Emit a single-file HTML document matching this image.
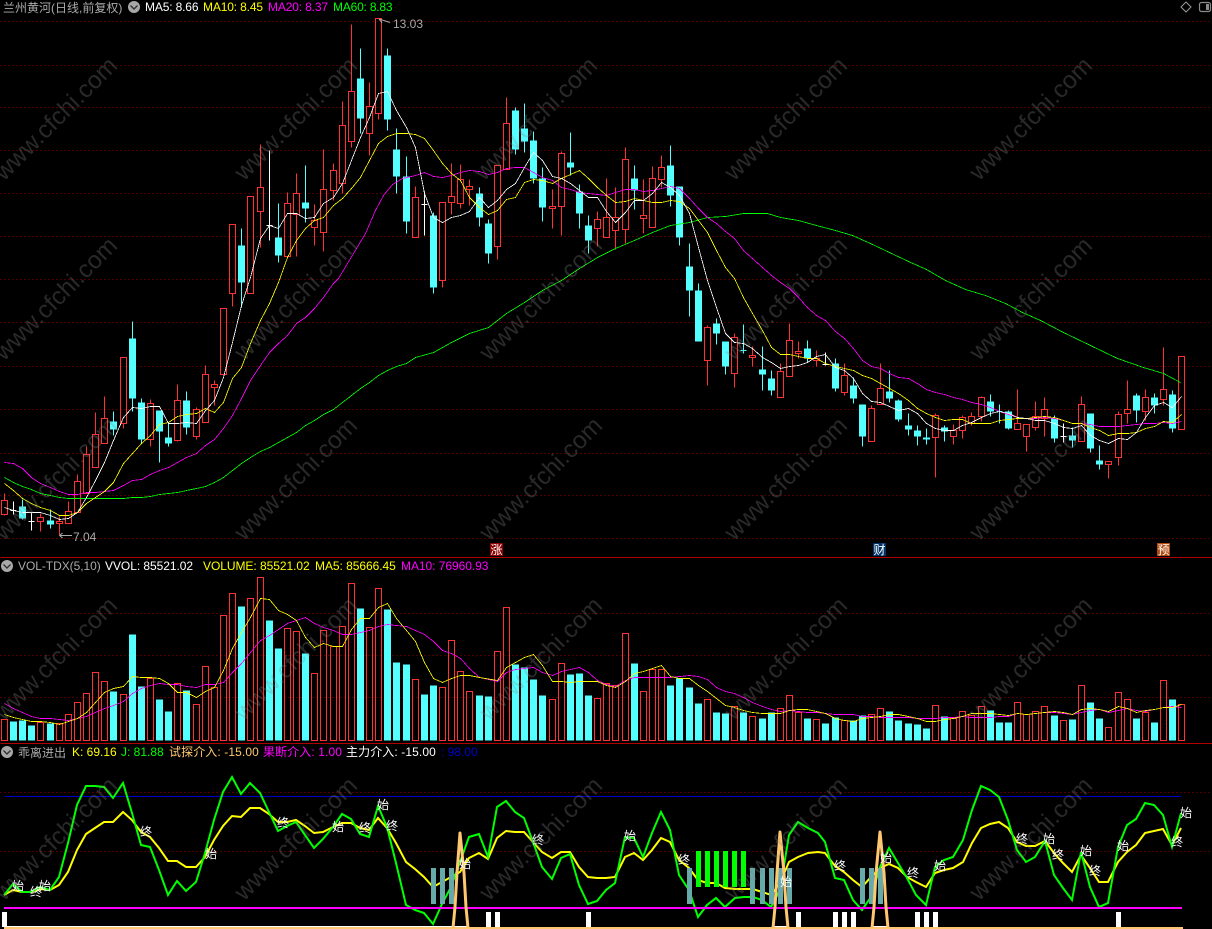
<!DOCTYPE html>
<html lang="zh">
<head>
<meta charset="utf-8">
<title>兰州黄河</title>
<style>
html,body{margin:0;padding:0;background:#000;width:1212px;height:929px;overflow:hidden}
svg{display:block;position:absolute;left:0;top:0}
text{font-family:"Liberation Sans","WenQuanYi Zen Hei","Noto Sans CJK SC",sans-serif;font-size:12px}
.h{letter-spacing:-.05px}
.g{fill:#aaa}
.m{font-size:12px;fill:#fff;text-anchor:middle}
.w{font-size:24.500px;fill:#888;fill-opacity:.3;text-anchor:middle}
.l{fill:none;shape-rendering:crispEdges}
.t{stroke-width:.8}
</style>
</head>
<body>
<svg width="1212" height="929" viewBox="0 0 1212 929" xmlns="http://www.w3.org/2000/svg">
<rect width="1212" height="929" fill="#000"/>
<g transform="translate(.5,.5)">
<!-- grids -->
<path class="l" stroke="#9a0000" stroke-dasharray="1 3" d="M0 21H1212M0 65H1212M0 107H1212M0 150H1212M0 193H1212M0 236H1212M0 279H1212M0 322H1212M0 366H1212M0 409H1212M0 453H1212M0 495H1212M0 538H1212M0 613H1212M0 655H1212M0 697H1212M0 792H1212M0 851H1212"/>
<path class="l" stroke="#b00000" d="M0 557H1212M0 743H1212"/>

<!-- main red candles -->
<path class="l" stroke="#ff3232" d="M1 500H7V514H1ZM4 493V500M4 514V515M37 517H43V521H37ZM40 513V517M40 521V531M56 521H62V523H56ZM59 516V521M59 523V535M65 511H71V523H65ZM68 501V511M74 481H80V512H74ZM77 474V481M83 454H89V493H83ZM86 446V454M92 434H98V467H92ZM95 412V434M101 418H107V443H101ZM104 396V418M120 357H126V423H120ZM123 423V428M147 403H153V439H147ZM150 399V403M150 439V446M174 400H180V440H174ZM177 384V400M177 440V441M193 409H199V436H193ZM196 407V409M196 436V439M202 374H208V422H202ZM205 365V374M211 384H217V387H211ZM214 380V384M214 387V405M220 308H226V374H220ZM229 224H235V293H229ZM232 293V306M247 196H253V293H247ZM257 187H263V211H257ZM260 144V187M260 211V247M284 203H290V256H284ZM287 192V203M293 193H299V214H293ZM296 173V193M296 214V256M311 220H317V227H311ZM314 204V220M314 227V245M320 189H326V232H320ZM323 149V189M323 232V251M330 170H336V190H330ZM333 163V170M333 190V200M339 125H345V183H339ZM342 101V125M342 183V193M348 91H354V141H348ZM351 24V91M351 141V147M366 106H372V133H366ZM369 82V106M369 133V155M375 18H381V113H375ZM378 113V119M412 197H418V237H412ZM415 186V197M439 202H445V280H439ZM442 280V287M448 196H454V202H448ZM451 163V196M451 202V214M457 179H463V203H457ZM460 164V179M460 203V208M466 186H472V189H466ZM469 179V186M469 189V205M494 165H500V246H494ZM497 246V259M503 123H509V169H503ZM506 97V123M549 206H555V208H549ZM552 189V206M552 208V228M558 153H564V206H558ZM561 151V153M561 206V235M594 219H600V228H594ZM597 211V219M597 228V246M603 217H609V237H603ZM606 178V217M612 217H618V230H612ZM615 187V217M615 230V249M622 159H628V229H622ZM625 147V159M625 229V243M640 215H646V218H640ZM643 179V215M643 218V233M649 178H655V227H649ZM652 166V178M658 167H664V179H658ZM661 155V167M661 179V187M704 327H710V360H704ZM707 325V327M707 360V385M731 337H737V373H731ZM734 333V337M734 373V387M749 355H755V357H749ZM752 346V355M752 357V366M777 371H783V397H777ZM780 363V371M786 340H792V376H786ZM789 323V340M795 351H801V353H795ZM798 341V351M798 353V358M813 358H819V360H813ZM816 350V358M816 360V366M841 375H847V392H841ZM844 363V375M844 392V395M868 408H874V441H868ZM871 405V408M877 388H883V404H877ZM880 363V388M932 415H938V437H932ZM935 413V415M935 437V477M950 430H956V436H950ZM953 424V430M953 436V444M959 417H965V430H959ZM962 415V417M962 430V438M968 416H974V423H968ZM971 412V416M971 423V425M978 397H984V416H978ZM981 396V397M981 416V421M1014 423H1020V429H1014ZM1017 389V423M1023 424H1029V436H1023ZM1026 436V451M1032 416H1038V427H1032ZM1035 401V416M1035 427V430M1041 409H1047V418H1041ZM1044 397V409M1044 418V436M1078 404H1084V441H1078ZM1081 396V404M1105 461H1111V464H1105ZM1108 464V478M1115 414H1121V457H1115ZM1118 411V414M1118 457V465M1124 409H1130V413H1124ZM1127 380V409M1127 413V423M1142 397H1148V411H1142ZM1145 389V397M1145 411V420M1160 389H1166V399H1160ZM1163 347V389M1163 399V405M1178 356H1184V429H1178Z"/>
<!-- main cyan wicks -->
<path class="l" stroke="#54ffff" d="M22 499V519M50 509V528M113 411V435M132 321V411M141 398V443M159 410V462M168 423V446M186 391V434M241 228V307M278 203V262M305 165V222M360 48V133M387 48V130M396 128V193M406 156V233M433 212V293M479 187V226M488 219V263M515 107V154M524 103V152M533 131V183M542 167V221M570 132V175M579 184V228M588 215V253M634 165V209M670 145V206M679 186V245M689 243V316M698 283V341M716 318V344M725 341V374M743 324V353M740 350H746M762 346V390M771 370V395M807 340V362M835 358V391M853 377V403M862 404V446M889 370V402M898 399V421M908 413V435M917 425V445M926 428V444M944 425V441M990 394V416M999 404V423M996 411H1002M1008 410V429M1054 415V442M1072 427V447M1090 413V452M1099 445V469M1136 393V422M1154 393V413M1172 390V432"/>
<!-- main cyan bodies -->
<path class="l" stroke="#54ffff" stroke-width="7" d="M22 506V518M50 520V524M113 421V429M132 338V398M141 402V439M159 410V431M168 437V443M186 400V427M241 245V282M278 237V255M305 202V208M360 78V118M387 55V119M396 149V176M406 176V221M433 215V287M479 193V217M488 223V253M515 110V149M524 128V141M533 140V178M542 178V207M570 162V167M579 191V213M588 225V240M634 178V190M670 165V195M679 186V237M689 266V290M698 290V341M716 323V333M725 341V366M762 369V374M771 378V390M807 348V358M835 363V388M853 385V398M862 404V436M889 391V398M898 400V419M908 425V429M917 430V436M926 437V439M944 427V431M990 401V411M1008 411V428M1054 418V438M1072 435V440M1090 413V448M1099 460V464M1136 395V410M1154 397V405M1172 394V428"/>
<!-- white dojis -->
<path class="l" stroke="#fff" d="M13 501V514M10 510H16M31 512V530M28 521H34M269 150V240M266 225H272M424 191V235M421 204H427M825 352V365M822 364H828M1063 423V442M1060 436H1066"/>

<!-- main MAs -->
<polyline class="l t" stroke="#00ff00" points="4,477 13,482 22,486 31,489 40,493 50,495 59,497 68,498 77,498 123,498 132,497 141,497 150,496 159,494 168,493 177,492 186,490 196,488 205,486 214,482 223,477 232,470 241,463 250,457 260,451 269,447 278,442 287,437 296,432 305,425 314,420 323,414 333,409 342,402 351,395 360,388 369,382 378,375 387,370 396,366 406,363 415,357 433,352 451,342 469,333 488,327 506,313 524,302 542,290 561,280 579,268 597,257 615,248 634,240 652,232 670,225 689,222 707,217 725,216 743,213 767,213 780,217 798,220 816,225 835,230 852,235 870,243 889,252 908,261 926,269 945,280 965,289 985,295 1005,303 1022,312 1040,320 1063,332 1090,345 1117,358 1143,367 1163,373 1180,382"/>
<polyline class="l t" stroke="#ff00ff" points="4,462 13,463 22,468 31,477 40,483 50,487 59,491 68,494 77,494 86,492 95,492 104,491 113,490 123,485 132,480 141,479 150,474 159,470 168,467 177,462 186,457 196,453 205,445 214,439 223,428 232,415 241,398 250,380 260,365 269,352 278,343 287,335 296,323 305,317 314,308 323,297 333,283 338,278 347,263 356,248 365,233 375,210 383,195 392,184 402,178 415,175 424,172 433,176 442,177 451,175 460,172 469,170 479,171 488,174 497,172 506,168 515,167 524,167 533,172 542,177 552,180 561,187 570,189 579,192 588,193 597,194 606,195 615,192 625,189 634,189 643,191 652,190 661,188 670,186 679,188 689,198 698,208 707,217 716,223 725,231 734,238 743,250 752,258 762,267 771,275 780,282 789,288 798,297 807,307 816,315 825,320 835,331 844,338 853,348 862,360 871,366 880,368 889,373 898,377 908,378 917,383 926,389 935,392 944,394 953,397 962,399 971,402 981,404 990,407 999,411 1008,414 1017,417 1026,418 1035,418 1044,417 1054,418 1063,420 1072,423 1081,423 1090,424 1099,426 1108,426 1118,426 1127,425 1136,424 1145,423 1154,423 1163,422 1172,423 1181,421"/>
<polyline class="l t" stroke="#ffff00" points="4,483 13,490 22,498 31,503 40,507 50,510 59,515 68,515 77,512 86,503 95,497 104,491 113,482 123,463 132,453 141,443 150,435 159,424 168,422 177,416 186,414 196,413 205,408 214,412 223,402 232,378 241,367 250,343 260,320 269,303 278,282 287,257 296,240 305,228 314,220 323,217 333,205 342,198 351,188 360,177 369,160 378,143 387,136 396,133 406,133 415,134 424,138 433,150 442,163 451,173 460,180 469,197 479,207 488,214 497,210 506,199 515,197 524,182 533,179 542,180 552,183 561,178 570,174 579,170 588,178 597,187 606,195 615,202 625,201 634,198 643,200 652,202 661,202 670,200 679,201 689,208 698,220 707,232 716,250 725,267 734,278 743,297 752,313 762,330 771,347 780,354 789,354 798,356 807,358 816,358 825,363 835,366 844,368 853,370 862,375 871,378 880,383 889,388 898,393 908,400 917,408 926,413 935,417 944,420 953,419 962,419 971,423 981,423 990,423 999,420 1008,419 1017,418 1026,418 1035,417 1044,416 1054,417 1063,420 1072,423 1081,423 1090,427 1099,430 1108,435 1118,433 1127,433 1136,432 1145,428 1154,426 1163,421 1172,422 1181,414"/>
<polyline class="l t" stroke="#ffffff" points="4,507 13,510 22,512 31,512 40,512 50,515 59,519 68,518 77,512 86,497 95,480 104,462 113,440 123,417 132,407 141,408 150,406 159,406 168,423 177,423 186,422 196,423 205,410 214,400 223,377 232,342 241,305 250,277 260,238 269,225 278,228 287,213 296,213 305,218 314,217 323,203 333,197 342,183 351,160 360,137 369,117 378,93 387,91 396,110 406,127 415,147 424,193 433,217 442,222 451,217 460,215 469,211 479,197 488,207 497,200 506,189 515,183 524,167 533,152 542,160 552,176 561,178 570,183 579,190 588,197 597,197 606,211 615,222 625,212 634,200 643,200 652,193 661,182 670,187 679,195 689,213 698,247 707,280 716,307 725,333 734,342 743,343 752,348 762,357 771,362 780,368 789,366 798,365 807,362 816,356 825,354 835,367 844,370 853,378 862,393 871,401 880,402 889,406 898,410 908,408 917,413 926,423 935,428 944,430 953,430 962,425 971,422 981,417 990,413 999,411 1008,413 1017,417 1026,418 1035,420 1044,420 1054,423 1063,427 1072,428 1081,425 1090,435 1099,440 1108,443 1118,438 1127,439 1136,432 1145,417 1154,405 1163,402 1172,407 1181,396"/>

<!-- volume red -->
<path class="l" stroke="#ff3232" d="M1 719H7V740H1ZM37 722H43V740H37ZM56 723H62V740H56ZM65 714H71V740H65ZM74 702H80V740H74ZM83 693H89V740H83ZM92 672H98V740H92ZM101 681H107V740H101ZM120 694H126V740H120ZM147 678H153V740H147ZM174 683H180V740H174ZM193 704H199V740H193ZM202 666H208V740H202ZM211 687H217V740H211ZM220 615H226V740H220ZM229 593H235V740H229ZM247 598H253V740H247ZM257 577H263V740H257ZM284 628H290V740H284ZM293 631H299V740H293ZM311 673H317V740H311ZM320 630H326V740H320ZM330 646H336V740H330ZM339 626H345V740H339ZM348 583H354V740H348ZM366 627H372V740H366ZM375 588H381V740H375ZM412 679H418V740H412ZM439 687H445V740H439ZM448 640H454V740H448ZM457 671H463V740H457ZM466 691H472V740H466ZM494 651H500V740H494ZM503 607H509V740H503ZM549 699H555V740H549ZM558 663H564V740H558ZM594 698H600V740H594ZM603 683H609V740H603ZM612 685H618V740H612ZM622 633H628V740H622ZM640 691H646V740H640ZM649 669H655V740H649ZM658 669H664V740H658ZM704 699H710V740H704ZM731 706H737V740H731ZM749 716H755V740H749ZM777 708H783V740H777ZM786 695H792V740H786ZM795 712H801V740H795ZM813 719H819V740H813ZM841 720H847V740H841ZM868 714H874V740H868ZM877 708H883V740H877ZM932 705H938V740H932ZM950 718H956V740H950ZM959 711H965V740H959ZM968 715H974V740H968ZM978 706H984V740H978ZM1014 702H1020V740H1014ZM1023 714H1029V740H1023ZM1032 711H1038V740H1032ZM1041 706H1047V740H1041ZM1060 720H1066V740H1060ZM1078 685H1084V740H1078ZM1105 727H1111V740H1105ZM1115 692H1121V740H1115ZM1124 699H1130V740H1124ZM1142 712H1148V740H1142ZM1160 680H1166V740H1160ZM1178 704H1184V740H1178Z"/>
<!-- volume cyan -->
<path class="l" stroke="#54ffff" stroke-width="7" d="M13 721V740M22 720V740M31 725V740M50 723V740M113 691V740M132 634V740M141 686V740M159 699V740M168 711V740M186 690V740M241 606V740M269 620V740M278 648V740M305 653V740M360 608V740M387 609V740M396 662V740M406 664V740M424 694V740M433 685V740M479 695V740M488 696V740M515 664V740M524 667V740M533 679V740M542 695V740M570 674V740M579 673V740M588 695V740M634 663V740M670 685V740M679 678V740M689 687V740M698 703V740M716 712V740M725 713V740M743 712V740M762 718V740M771 712V740M807 718V740M825 723V740M835 717V740M853 720V740M862 715V740M889 711V740M898 720V740M908 723V740M917 724V740M926 728V740M944 716V740M990 710V740M999 722V740M1008 722V740M1054 715V740M1072 719V740M1090 702V740M1099 718V740M1136 718V740M1154 722V740M1172 699V740"/>
<polyline class="l t" stroke="#ff00ff" points="4,703 13,708 22,712 31,716 40,718 50,718 59,719 68,720 77,718 86,716 95,712 104,708 113,705 123,701 132,693 141,688 150,685 159,683 168,684 177,684 186,686 196,687 205,684 214,684 223,682 232,672 241,663 250,652 260,640 269,635 278,629 287,623 296,620 305,617 314,623 323,627 333,630 342,634 351,634 360,632 369,630 378,626 387,624 396,625 406,626 415,630 424,634 433,641 442,650 451,653 460,658 469,668 479,677 497,681 506,672 515,669 524,668 533,667 542,672 552,675 561,671 570,669 579,667 588,672 597,680 606,684 615,686 625,680 634,677 643,677 652,677 661,677 670,677 679,676 689,675 698,676 707,679 716,687 725,691 734,693 743,697 752,702 762,706 771,709 780,711 789,710 798,711 807,712 816,712 825,713 835,714 844,714 853,714 862,716 871,716 880,717 889,717 898,717 908,717 917,718 926,718 935,718 944,717 953,717 962,716 971,717 981,717 990,717 999,716 1008,716 1017,713 1026,714 1035,713 1044,712 1054,712 1063,713 1072,714 1081,712 1090,710 1099,709 1108,712 1118,710 1127,708 1136,710 1145,711 1154,709 1163,707 1172,706 1181,707"/>
<polyline class="l t" stroke="#ffff00" points="4,714 13,717 22,719 31,721 40,721 50,722 59,724 68,721 77,718 86,712 95,702 104,692 113,688 123,686 132,676 141,677 150,677 159,678 168,683 177,692 186,692 196,697 205,691 214,687 223,670 232,648 241,632 250,617 260,598 269,599 278,610 287,614 296,620 305,637 314,647 323,643 333,646 342,646 351,629 360,618 369,618 378,607 387,603 396,618 406,630 415,641 424,662 433,678 442,682 451,678 460,675 469,675 479,677 497,680 506,667 515,662 524,657 533,654 542,665 552,681 561,681 570,682 579,681 588,681 597,681 606,685 615,687 625,681 634,673 643,671 652,668 661,665 670,676 679,678 689,678 698,685 707,691 716,698 725,705 734,707 743,710 752,712 762,713 771,713 780,713 789,710 798,709 807,709 816,711 825,713 835,718 844,720 853,721 862,718 871,717 880,716 889,714 898,714 908,716 917,718 926,721 935,721 944,719 953,718 962,716 971,713 981,713 990,713 999,714 1008,715 1017,713 1026,714 1035,713 1044,712 1054,711 1063,712 1072,714 1081,709 1090,708 1099,709 1108,711 1118,706 1127,708 1136,712 1145,710 1154,709 1163,707 1172,707 1181,704"/>

<!-- lower panel -->
<path class="l" stroke="#0000c8" d="M4 796H1181"/>
</g>

<polyline fill="none" stroke="#ffff00" stroke-width="2" points="4,895 13,890 22,892 31,892 40,889 50,890 59,885 68,872 77,850 86,834 95,828 104,822 113,822 123,812 132,820 141,832 150,837 159,848 168,861 177,861 186,867 196,867 205,857 214,840 223,826 232,816 241,817 250,808 260,808 269,814 278,822 287,822 296,820 305,826 314,833 323,832 333,827 342,823 351,823 360,828 369,830 378,818 387,828 396,843 406,862 415,869 424,877 433,887 442,882 451,877 460,872 469,858 479,853 488,859 497,838 506,831 515,832 524,832 533,842 542,852 552,858 561,852 570,852 579,867 588,877 597,878 606,878 615,877 625,857 634,853 643,860 652,850 661,838 670,842 679,860 689,868 698,880 707,883 716,883 725,888 735,889 744,889 753,889 762,892 771,895 780,883 789,862 798,857 808,853 818,852 825,853 835,866 844,872 853,880 862,887 871,877 880,868 889,864 898,868 907,877 916,882 926,887 935,873 944,870 953,868 963,862 972,843 981,828 990,824 999,822 1008,828 1017,842 1026,846 1035,846 1045,841 1054,853 1063,863 1072,872 1081,855 1090,868 1099,882 1108,882 1118,862 1127,852 1136,845 1145,833 1154,831 1163,829 1172,845 1181,828"/>
<polyline fill="none" stroke="#00ff00" stroke-width="2" points="4,895 13,884 22,892 31,892 40,887 50,890 59,877 68,843 77,805 86,786 95,786 104,787 113,798 123,783 132,813 141,845 150,847 159,870 168,895 177,881 186,891 196,882 205,853 214,820 223,792 232,777 241,794 250,783 260,793 269,812 278,831 287,826 296,822 305,835 314,848 323,839 333,827 342,814 351,819 360,834 369,837 378,806 387,827 396,863 406,905 415,910 424,913 433,924 442,904 451,887 460,862 469,837 479,834 488,857 497,807 506,801 515,812 524,818 533,842 542,867 552,879 561,858 570,854 579,885 588,904 597,901 606,890 615,883 625,837 634,838 643,857 652,833 661,812 670,830 679,875 689,890 698,917 707,905 716,898 725,907 735,898 744,897 753,897 762,900 771,907 780,890 789,835 798,822 808,828 818,833 825,842 835,878 844,880 853,900 862,910 871,897 880,867 889,848 898,863 907,878 916,895 926,905 935,867 944,860 953,857 963,840 972,810 981,786 990,790 999,797 1008,820 1017,850 1026,862 1035,857 1045,841 1054,875 1063,888 1072,900 1081,852 1090,887 1099,907 1108,903 1118,847 1127,825 1136,819 1145,803 1154,805 1163,815 1172,847 1181,813"/>

<!-- teal bars -->
<path fill="#66aaaa" d="M431 868h5v36h-5zM440 868h5v36h-5zM449 868h5v36h-5zM687 868h5v36h-5zM750 868h5v36h-5zM760 868h5v36h-5zM769 868h5v36h-5zM778 868h5v36h-5zM787 868h5v36h-5zM860 868h5v36h-5zM869 868h5v36h-5zM878 868h5v36h-5z"/>
<!-- green bars -->
<path fill="#00ff00" d="M696 851h5v36h-5zM705 851h5v36h-5zM714 851h5v36h-5zM723 851h5v36h-5zM732 851h5v36h-5zM741 851h5v36h-5z"/>
<!-- magenta line -->
<rect x="4" y="907" width="1178" height="2" fill="#ff00ff"/>
<!-- white bars -->
<path fill="#fff" d="M2 912h5v15h-5zM486 912h5v15h-5zM495 912h5v15h-5zM586 912h5v15h-5zM796 912h5v15h-5zM833 912h5v15h-5zM842 912h5v15h-5zM851 912h5v15h-5zM915 912h5v15h-5zM924 912h5v15h-5zM933 912h5v15h-5zM1116 912h5v15h-5z"/>
<rect x="4" y="926" width="448" height="1" fill="#fff"/>
<rect x="452" y="926" width="17" height="1" fill="#fff"/>
<rect x="772" y="926" width="17" height="1" fill="#fff"/>
<rect x="871" y="926" width="18" height="1" fill="#fff"/>
<rect x="4" y="927" width="1179" height="2" fill="#ffc870"/>
<!-- tents -->
<g fill="none" stroke="#ffc870" stroke-width="3" stroke-linejoin="round">
<polyline points="453,928 455,907 457,873 460,833 464,873 466,907 468,928"/>
<polyline points="773,928 775,907 777,873 780,832 784,873 786,907 788,928"/>
<polyline points="872,928 874,907 876,873 880,832 884,873 886,907 888,928"/>
</g>
<!-- markers -->
<g>
<text class="m" x="18" y="890">始</text><text class="m" x="36" y="896">终</text><text class="m" x="45" y="890">始</text>
<text class="m" x="146" y="836">终</text><text class="m" x="211" y="858">始</text><text class="m" x="283" y="827">终</text>
<text class="m" x="338" y="831">始</text><text class="m" x="365" y="832">终</text><text class="m" x="383" y="809">始</text>
<text class="m" x="392" y="830">终</text><text class="m" x="465" y="868">始</text><text class="m" x="538" y="844">终</text>
<text class="m" x="630" y="840">始</text><text class="m" x="684" y="864">终</text><text class="m" x="786" y="886">始</text>
<text class="m" x="840" y="870">终</text><text class="m" x="886" y="862">始</text><text class="m" x="913" y="877">终</text>
<text class="m" x="940" y="870">始</text><text class="m" x="1022" y="843">终</text><text class="m" x="1049" y="843">始</text>
<text class="m" x="1058" y="859">终</text><text class="m" x="1086" y="855">始</text><text class="m" x="1095" y="875">终</text>
<text class="m" x="1123" y="850">始</text><text class="m" x="1177" y="846">终</text><text class="m" x="1186" y="817">始</text>
</g>

<!-- price labels -->
<path fill="none" stroke="#aaa" d="M379 19l3 4M379 19l11 3.500M59.500 535.500H72M59.500 535.500l3-2.500M59.500 535.500l3 2.500"/>
<text class="g" x="393" y="28">13.03</text>
<text class="g" x="73" y="541">7.04</text>

<!-- event tags -->
<rect x="490" y="543" width="13" height="13" fill="#8c0000"/>
<text x="490.500" y="554" fill="#fff">涨</text>
<rect x="873" y="543" width="13" height="13" fill="#003468"/>
<text x="873.500" y="554" fill="#fff">财</text>
<rect x="1157" y="543" width="13" height="13" fill="#b04a10"/>
<text x="1157.500" y="554" fill="#fff">预</text>

<!-- headers -->
<text class="g" x="3" y="12">兰州黄河(日线,前复权)</text>
<circle cx="134" cy="7" r="6" fill="#a8a8a8"/><path d="M130.500 5.500l3.500 3.500 3.500-3.500" fill="none" stroke="#333" stroke-width="1.400"/>
<text class="h" x="145" y="11" fill="#fff" style="letter-spacing:-.15px">MA5: 8.66</text>
<text class="h" x="203" y="11" fill="#ffff00" style="letter-spacing:-.15px">MA10: 8.45</text>
<text class="h" x="268" y="11" fill="#ff00ff" style="letter-spacing:-.15px">MA20: 8.37</text>
<text class="h" x="333" y="11" fill="#00ff00" style="letter-spacing:-.2px">MA60: 8.83</text>

<path d="M1186 2l5 5-5 5-5-5z" fill="none" stroke="#999"/>
<rect x="1199.500" y="2.500" width="11" height="9" rx="2" fill="none" stroke="#8a8a8a" stroke-width="1.200"/>
<rect x="1206" y="4" width="3" height="6" fill="#8a8a8a"/>

<circle cx="7" cy="566" r="6" fill="#a8a8a8"/><path d="M3.500 564.500l3.500 3.500 3.500-3.500" fill="none" stroke="#333" stroke-width="1.400"/>
<text class="h g" x="18" y="570">VOL-TDX(5,10)</text>
<text class="h" x="105" y="570" fill="#fff">VVOL: 85521.02</text>
<text class="h" x="203" y="570" fill="#ffff00">VOLUME: 85521.02</text>
<text class="h" x="315" y="570" fill="#ffff00">MA5: 85666.45</text>
<text class="h" x="401" y="570" fill="#ff00ff">MA10: 76960.93</text>

<circle cx="7" cy="752" r="6" fill="#a8a8a8"/><path d="M3.500 750.500l3.500 3.500 3.500-3.500" fill="none" stroke="#333" stroke-width="1.400"/>
<text class="g" x="18" y="757">乖离进出</text>
<text x="72" y="756" fill="#ffff00">K: 69.16</text>
<text x="121" y="756" fill="#00ff00">J: 81.88</text>
<text x="169" y="756" fill="#ffc870" style="letter-spacing:.1px">试探介入: -15.00</text>
<text x="263" y="756" fill="#ff00ff" style="letter-spacing:.1px">果断介入: 1.00</text>
<text x="346" y="756" fill="#fff" style="letter-spacing:.1px">主力介入: -15.00</text>
<text x="441" y="756" fill="#0000c8">: 98.00</text>

<!-- watermark -->
<g>
<text class="w" x="55" y="127" transform="rotate(-45 55 118)">www.cfchi.com</text>
<text class="w" x="295" y="127" transform="rotate(-45 295 118)">www.cfchi.com</text>
<text class="w" x="535" y="127" transform="rotate(-45 535 118)">www.cfchi.com</text>
<text class="w" x="785" y="127" transform="rotate(-45 785 118)">www.cfchi.com</text>
<text class="w" x="1030" y="127" transform="rotate(-45 1030 118)">www.cfchi.com</text>
<text class="w" x="55" y="307" transform="rotate(-45 55 298)">www.cfchi.com</text>
<text class="w" x="295" y="307" transform="rotate(-45 295 298)">www.cfchi.com</text>
<text class="w" x="540" y="307" transform="rotate(-45 540 298)">www.cfchi.com</text>
<text class="w" x="785" y="307" transform="rotate(-45 785 298)">www.cfchi.com</text>
<text class="w" x="1030" y="307" transform="rotate(-45 1030 298)">www.cfchi.com</text>
<text class="w" x="55" y="487" transform="rotate(-45 55 478)">www.cfchi.com</text>
<text class="w" x="295" y="487" transform="rotate(-45 295 478)">www.cfchi.com</text>
<text class="w" x="540" y="487" transform="rotate(-45 540 478)">www.cfchi.com</text>
<text class="w" x="785" y="487" transform="rotate(-45 785 478)">www.cfchi.com</text>
<text class="w" x="1030" y="487" transform="rotate(-45 1030 478)">www.cfchi.com</text>
<text class="w" x="55" y="667" transform="rotate(-45 55 658)">www.cfchi.com</text>
<text class="w" x="295" y="667" transform="rotate(-45 295 658)">www.cfchi.com</text>
<text class="w" x="540" y="667" transform="rotate(-45 540 658)">www.cfchi.com</text>
<text class="w" x="785" y="667" transform="rotate(-45 785 658)">www.cfchi.com</text>
<text class="w" x="1030" y="667" transform="rotate(-45 1030 658)">www.cfchi.com</text>
<text class="w" x="55" y="847" transform="rotate(-45 55 838)">www.cfchi.com</text>
<text class="w" x="295" y="847" transform="rotate(-45 295 838)">www.cfchi.com</text>
<text class="w" x="540" y="847" transform="rotate(-45 540 838)">www.cfchi.com</text>
<text class="w" x="785" y="847" transform="rotate(-45 785 838)">www.cfchi.com</text>
<text class="w" x="1030" y="847" transform="rotate(-45 1030 838)">www.cfchi.com</text>
</g>
</svg>
</body>
</html>
